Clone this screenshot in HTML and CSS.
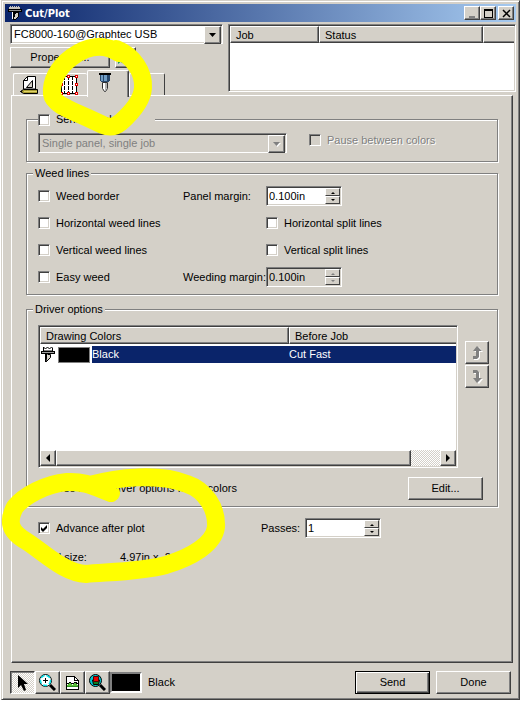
FILE: index.html
```html
<!DOCTYPE html>
<html lang="en">
<head>
    <meta charset="UTF-8">
    <meta name="viewport" content="width=device-width, initial-scale=1.0">
    <title>Cut/Plot</title>
    <link rel="stylesheet" href="styles.css">
</head>
<body>
    <div class="window">
        <header class="title-bar">
            <svg class="title-icon" width="16" height="16" viewBox="0 0 16 16" shape-rendering="crispEdges">
                <path d="M3 1h1v1h1v-1h1v1h1v-1h1v1h1v-1h1v1h1v-1h1v1h1v3h-11v-3h1z" fill="#c8c4bc"/>
                <path d="M1 4h14v3h-14z" fill="#000"/>
                <path d="M2 5h12v1h-12z" fill="#909090"/>
                <path d="M5 7h7v5l-4 3h-2z" fill="#000"/>
                <path d="M9 8h2v3l-3 3h-1z" fill="#d4d0c8"/>
                <path d="M5 7h1v7h-1z" fill="#fff"/>
            </svg>
            <h1>Cut/Plot</h1>
            <button type="button" class="caption-btn" aria-label="Minimize">
                <svg width="9" height="9" viewBox="0 0 9 9"><path d="M1 7h6v2h-6z" fill="#808080"/></svg>
            </button>
            <button type="button" class="caption-btn" aria-label="Maximize">
                <svg width="9" height="9" viewBox="0 0 9 9"><path d="M0 0h9v9h-9zM1 2v6h7v-6z" fill="#000" fill-rule="evenodd"/></svg>
            </button>
            <button type="button" class="caption-btn close-btn" aria-label="Close">
                <svg width="9" height="9" viewBox="0 0 9 9"><path d="M1 1l7 7M8 1l-7 7" stroke="#000" stroke-width="1.500"/></svg>
            </button>
        </header>

        <div class="top-area">
            <div class="device-column">
                <div class="combo">
                    <select aria-label="Device">
                        <option>FC8000-160@Graphtec USB</option>
                    </select>
                </div>
                <div class="device-buttons">
                    <button type="button" class="btn properties-btn">Properties...</button>
                    <button type="button" class="btn refresh-btn" aria-label="Refresh">
                        <svg width="15" height="15" viewBox="0 0 15 15" fill="none" stroke="#18a050" stroke-width="3">
                            <path d="M3 7a5 5 0 0 1 8-3M12 8a5 5 0 0 1-8 3"/>
                            <path d="M9 6h5v-6zM6 9h-6v5z" fill="#18a050" stroke="none"/>
                        </svg>
                    </button>
                </div>
                <div class="tabs" role="tablist">
                    <button type="button" class="tab tab-first" role="tab" aria-label="Page">
                        <svg width="18" height="18" viewBox="0 0 18 18">
                            <path d="M3.500 13v-8.500l4-4h8v12.500z" fill="#fff" stroke="#000"/>
                            <path d="M3.500 4.500h4v-4" fill="none" stroke="#000"/>
                            <path d="M6.500 11.500h6v-7z" fill="#d4d0c8" stroke="#000"/>
                            <path d="M.5 15.500l3-2h14v4h-14z" fill="#a89c30" stroke="#000"/>
                            <path d="M4 15.500h13" stroke="#e0d468"/>
                            <path d="M0 15.500l2-1v2z" fill="#000"/>
                        </svg>
                    </button>
                    <button type="button" class="tab tab-wide" role="tab" aria-label="Panels">
                        <svg width="18" height="20" viewBox="0 0 18 20" shape-rendering="crispEdges">
                            <path d="M1 1h15v18h-15z" fill="#fff"/>
                            <path d="M4.500 1v18M8.500 1v18M12.500 1v18" stroke="#000" stroke-dasharray="4 1"/>
                            <path d="M1.500 1v18M16.500 1v18M1 1.500h15M1 18.500h15" stroke="#000"/>
                            <path d="M0 0h3v3h-3zM7 0h3v3h-3zM15 0h3v3h-3zM15 8h3v3h-3zM0 8h3v3h-3zM0 17h3v3h-3zM7 17h3v3h-3zM15 17h3v3h-3z" fill="#e00000"/>
                            <path d="M1 1h1v1h-1zM8 1h1v1h-1zM16 1h1v1h-1zM16 9h1v1h-1zM1 9h1v1h-1zM1 18h1v1h-1zM8 18h1v1h-1zM16 18h1v1h-1z" fill="#fff"/>
                        </svg>
                    </button>
                    <button type="button" class="tab tab-active" role="tab" aria-selected="true" aria-label="Cut options">
                        <svg width="12" height="20" viewBox="0 0 12 20">
                            <path d="M0 0h12v2h-12z" fill="#000"/>
                            <path d="M1 2h10v6h-1v1h-8v-1h-1z" fill="#26466b"/>
                            <path d="M2 2h2v6h-2zM5 2h3v6h-3z" fill="#6f9cc4"/>
                            <path d="M3.500 9.500h5v6l-2 3h-1l-2-3z" fill="#fff" stroke="#303030"/>
                            <path d="M6 10h2v5l-2 3z" fill="#b0b0b0"/>
                        </svg>
                    </button>
                    <button type="button" class="tab" role="tab" aria-label="Advanced">
                        <svg width="18" height="18" viewBox="0 0 18 18" shape-rendering="crispEdges">
                            <path d="M0 2h2v2h-2zM3 6h5v7h-5zM11 15h2v1h-2z" fill="#404040"/>
                        </svg>
                    </button>
                </div>
            </div>

            <div class="list job-list">
                <table>
                    <thead>
                        <tr><th class="job-col">Job</th><th class="status-col">Status</th><th></th></tr>
                    </thead>
                </table>
            </div>
        </div>

        <main class="panel">
            <fieldset class="group send-group">
                <legend class="check-legend">
                    <label class="check"><input type="checkbox"> Send panels</label>
                </legend>
                <div class="send-row">
                    <div class="combo combo-disabled">
                        <select aria-label="Panel mode" disabled>
                            <option>Single panel, single job</option>
                        </select>
                    </div>
                    <label class="check check-disabled"><input type="checkbox" disabled> Pause between colors</label>
                </div>
            </fieldset>

            <fieldset class="group weed-group">
                <legend>Weed lines</legend>
                <div class="weed-grid">
                    <label class="check"><input type="checkbox"> Weed border</label>
                    <label for="panelMargin">Panel margin:</label>
                    <div class="spin">
                        <input type="text" id="panelMargin" value="0.100in">
                        <div class="spin-buttons">
                            <button type="button" class="spin-up" aria-label="Increase"></button>
                            <button type="button" class="spin-down" aria-label="Decrease"></button>
                        </div>
                    </div>

                    <label class="check check-left"><input type="checkbox"> Horizontal weed lines</label>
                    <label class="check"><input type="checkbox"> Horizontal split lines</label>

                    <label class="check check-left"><input type="checkbox"> Vertical weed lines</label>
                    <label class="check"><input type="checkbox"> Vertical split lines</label>

                    <label class="check"><input type="checkbox"> Easy weed</label>
                    <label for="weedingMargin">Weeding margin:</label>
                    <div class="spin spin-disabled">
                        <input type="text" id="weedingMargin" value="0.100in" disabled>
                        <div class="spin-buttons">
                            <button type="button" class="spin-up" aria-label="Increase" disabled></button>
                            <button type="button" class="spin-down" aria-label="Decrease" disabled></button>
                        </div>
                    </div>
                </div>
            </fieldset>

            <fieldset class="group driver-group">
                <legend>Driver options</legend>
                <div class="driver-row">
                    <div class="list color-list">
                        <table>
                            <thead>
                                <tr><th class="color-col">Drawing Colors</th><th>Before Job</th></tr>
                            </thead>
                            <tbody>
                                <tr>
                                    <td>
                                        <div class="color-cell">
                                            <svg width="14" height="17" viewBox="0 0 14 17">
                                                <path d="M2.500 5v-4l2 2 2-2 2 2 2-2 1 1v3z" fill="#fff" stroke="#000"/>
                                                <path d="M0 5h14v3h-14z" fill="#000"/>
                                                <path d="M1 6h12v1h-12z" fill="#a0a0a0"/>
                                                <path d="M4 8h2v8h-2z" fill="#000"/>
                                                <path d="M6.500 8.500h3v3l-4 4" fill="#d4d0c8" stroke="#000"/>
                                            </svg>
                                            <span class="color-swatch"></span>
                                            <span class="color-name">Black</span>
                                        </div>
                                    </td>
                                    <td class="selected">Cut Fast</td>
                                </tr>
                            </tbody>
                        </table>
                        <div class="scrollbar">
                            <button type="button" class="scroll-btn" aria-label="Scroll left">
                                <svg width="4" height="8" viewBox="0 0 4 8"><path d="M4 0v8l-4-4z"/></svg>
                            </button>
                            <span class="scroll-thumb"></span>
                            <span class="scroll-track"></span>
                            <button type="button" class="scroll-btn" aria-label="Scroll right">
                                <svg width="4" height="8" viewBox="0 0 4 8"><path d="M0 0v8l4-4z"/></svg>
                            </button>
                        </div>
                    </div>
                    <div class="order-buttons">
                        <button type="button" class="btn" aria-label="Move up">
                            <svg width="11" height="14" viewBox="0 0 11 14">
                                <path d="M2 14v-3h3v-5h-3l5-5 4 5h-3v6l-2 2z" fill="#fff"/>
                                <path d="M1 13v-3h3v-5h-3l4-5 5 5h-3v6l-2 2z" fill="#808080"/>
                            </svg>
                        </button>
                        <button type="button" class="btn" aria-label="Move down">
                            <svg width="11" height="14" viewBox="0 0 11 14">
                                <path d="M2 1v3h3v5h-3l5 5 4-5h-3v-6l-2-2z" fill="#fff"/>
                                <path d="M1 0v3h3v5h-3l4 5 5-5h-3v-6l-2-2z" fill="#808080"/>
                            </svg>
                        </button>
                    </div>
                </div>
                <div class="edit-row">
                    <label class="check"><input type="checkbox"> Use same driver options for all colors</label>
                    <button type="button" class="btn">Edit...</button>
                </div>
            </fieldset>

            <div class="plot-row">
                <label class="check"><input type="checkbox" checked> Advance after plot</label>
                <label for="passes">Passes:</label>
                <div class="spin">
                    <input type="text" id="passes" value="1">
                    <div class="spin-buttons">
                        <button type="button" class="spin-up" aria-label="Increase"></button>
                        <button type="button" class="spin-down" aria-label="Decrease"></button>
                    </div>
                </div>
            </div>
            <div class="size-row">
                <span>Total size:</span>
                <span>4.97in x&nbsp; 2.87in</span>
            </div>
        </main>

        <footer class="footer">
            <div class="tools">
                <button type="button" class="btn tool pressed" aria-label="Select">
                    <svg width="11" height="16" viewBox="0 0 11 16"><path d="M1 0v13l3-3 3 6 2-1-2-6h4z"/></svg>
                </button>
                <button type="button" class="btn tool" aria-label="Zoom">
                    <svg width="17" height="17" viewBox="0 0 17 17">
                        <path d="M11 11l5 5" stroke="#000" stroke-width="3"/>
                        <circle cx="6.500" cy="6.500" r="6" fill="#fff" stroke="#000"/>
                        <circle cx="6.500" cy="6.500" r="5" fill="none" stroke="#00e0e8" stroke-width="1.500" stroke-dasharray="4 2"/>
                        <path d="M4 6.500h5M6.500 4v5" stroke="#000"/>
                    </svg>
                </button>
                <button type="button" class="btn tool" aria-label="Fit page">
                    <svg width="13" height="14" viewBox="0 0 13 14" shape-rendering="crispEdges">
                        <path d="M.5 .5h8l4 4v9h-12z" fill="#fff" stroke="#000"/>
                        <path d="M8.500 .5v4h4" fill="none" stroke="#000"/>
                        <path d="M1 9l3-2 2 2 3-2 3 2v2h-11z" fill="#5bbf3c"/>
                        <path d="M1 8l2-1 1-1 2 2 2-1 1-1 3 2" fill="none" stroke="#000"/>
                        <path d="M1 10h11v1h-11z" fill="#2b8a1e"/>
                    </svg>
                </button>
                <button type="button" class="btn tool" aria-label="Zoom selection">
                    <svg width="17" height="17" viewBox="0 0 17 17">
                        <path d="M11 11l5 5" stroke="#000" stroke-width="3"/>
                        <circle cx="6.500" cy="6.500" r="6" fill="#00c8d0" stroke="#000"/>
                        <path d="M3.500 6h7l-1 4.500h-5z" fill="#108020" stroke="#000"/>
                        <path d="M4.500 2.500h5v5h-5z" fill="#e80000" stroke="#500000"/>
                    </svg>
                </button>
                <span class="current-swatch"></span>
                <span class="current-name">Black</span>
            </div>
            <button type="button" class="btn default-btn">Send</button>
            <button type="button" class="btn">Done</button>
        </footer>

        <svg class="marker" width="240" height="600" viewBox="0 0 240 600" aria-hidden="true">
            <path d="M119 53C104 43 87 46 72 57S51 82 52 94C53 104 70 110 88 118L103 125C110 128 115 127 121 122C130 114 142 101 143 88C144 73 134 56 116 49"/>
            <path d="M111 493C95 487 85 481 67 482C45 484 24 496 15 507C6 524 12 533 26 541C45 553 64 573 86 574C105 572 140 572 166 565C192 557 214 544 216 527C217 508 205 490 187 484C160 473 118 477 90 485"/>
        </svg>
    </div>
</body>
</html>
```
FILE: styles.css
```css
:root {
    --face: #d4d0c8;
    --light: #fff;
    --shadow: #808080;
    --dark: #404040;
    --highlight: #0a246a;
}

* {
    margin: 0;
    padding: 0;
    box-sizing: border-box;
}

body {
    display: flex;
    min-height: 100vh;
    padding: 0 3px 1px 1px;
    background: #fff;
    color: #000;
    font: 11px/13px "Liberation Sans", Arial, sans-serif;
}

button,
input,
select {
    font: inherit;
    color: inherit;
    border-radius: 0;
}

svg {
    display: block;
    flex: none;
}

.window {
    position: relative;
    flex: 1;
    display: flex;
    flex-direction: column;
    padding: 3px;
    background: var(--face);
    border: 1px solid;
    border-color: var(--face) var(--dark) var(--dark) var(--face);
    box-shadow: inset 1px 1px 0 var(--light), inset -1px -1px 0 var(--shadow);
}

/* Title bar */
.title-bar {
    display: flex;
    align-items: center;
    height: 18px;
    padding: 0 2px;
    background: linear-gradient(to right, #0a246a, #a6caf0);
    color: #fff;
}

.title-bar h1 {
    flex: 1;
    margin-left: 2px;
    font: bold 11px/13px "DejaVu Sans Condensed", Tahoma, sans-serif;
}

.caption-btn {
    display: flex;
    align-items: center;
    justify-content: center;
    width: 16px;
    height: 14px;
    background: var(--face);
    border: 1px solid;
    border-color: var(--light) var(--dark) var(--dark) var(--light);
    box-shadow: inset -1px -1px 0 var(--shadow);
}

.close-btn {
    margin-left: 2px;
}

/* Buttons */
.btn {
    display: flex;
    align-items: center;
    justify-content: center;
    width: 75px;
    height: 23px;
    background: var(--face);
    border: 1px solid;
    border-color: var(--light) var(--dark) var(--dark) var(--light);
    box-shadow: inset -1px -1px 0 var(--shadow);
}

.default-btn {
    border-color: #000;
    box-shadow: inset 1px 1px 0 var(--light), inset -1px -1px 0 var(--dark), inset -2px -2px 0 var(--shadow);
}

/* Drop-downs */
.combo {
    position: relative;
    height: 20px;
    background: #fff;
    border: 1px solid;
    border-color: var(--shadow) var(--light) var(--light) var(--shadow);
    box-shadow: inset 1px 1px 0 var(--dark), inset -1px -1px 0 var(--face);
}

.combo select {
    appearance: none;
    display: block;
    width: 100%;
    height: 18px;
    padding: 0 20px 0 3px;
    background: transparent;
    border: none;
}

.combo::after {
    content: "";
    position: absolute;
    top: 1px;
    right: 1px;
    width: 15px;
    height: 16px;
    background: url("data:image/svg+xml,%3Csvg xmlns='http://www.w3.org/2000/svg' width='7' height='4'%3E%3Cpath d='M0 0h7l-3.500 4z'/%3E%3C/svg%3E") center no-repeat var(--face);
    border: 1px solid;
    border-color: var(--light) var(--dark) var(--dark) var(--light);
    box-shadow: inset -1px -1px 0 var(--shadow);
    pointer-events: none;
}

.combo-disabled {
    flex: none;
    width: 249px;
    background: var(--face);
}

.combo-disabled select {
    color: var(--shadow);
    opacity: 1;
}

.combo-disabled::after {
    background-image: url("data:image/svg+xml,%3Csvg xmlns='http://www.w3.org/2000/svg' width='8' height='5'%3E%3Cpath d='M1 1h7l-3.500 4z' fill='white'/%3E%3Cpath d='M0 0h7l-3.500 4z' fill='gray'/%3E%3C/svg%3E");
}

/* Check boxes */
.check {
    display: flex;
    align-items: center;
    gap: 6px;
    white-space: nowrap;
}

.check input {
    appearance: none;
    flex: none;
    width: 12px;
    height: 12px;
    background: #fff center no-repeat;
    border: 1px solid;
    border-color: var(--shadow) var(--light) var(--light) var(--shadow);
    box-shadow: inset 1px 1px 0 var(--dark), inset -1px -1px 0 var(--face);
}

.check input:checked {
    background-image: url("data:image/svg+xml,%3Csvg xmlns='http://www.w3.org/2000/svg' width='8' height='8'%3E%3Cpath d='M1 3l2 2 4-4v3l-4 4-2-2z'/%3E%3C/svg%3E");
}

.check-disabled {
    color: var(--shadow);
    text-shadow: 1px 1px 0 var(--light);
}

.check-disabled input {
    background-color: var(--face);
}

/* Spin boxes */
.spin {
    display: flex;
    width: 76px;
    height: 20px;
    padding: 1px;
    background: #fff;
    border: 1px solid;
    border-color: var(--shadow) var(--light) var(--light) var(--shadow);
    box-shadow: inset 1px 1px 0 var(--dark), inset -1px -1px 0 var(--face);
}

.spin input {
    flex: 1;
    min-width: 0;
    padding-left: 1px;
    background: transparent;
    border: none;
}

.spin-buttons {
    display: flex;
    flex-direction: column;
    width: 15px;
}

.spin-buttons button {
    flex: 1;
    background-color: var(--face);
    background-position: center;
    background-repeat: no-repeat;
    border: 1px solid;
    border-color: var(--light) var(--dark) var(--dark) var(--light);
}

.spin-up {
    background-image: url("data:image/svg+xml,%3Csvg xmlns='http://www.w3.org/2000/svg' width='5' height='3'%3E%3Cpath d='M1 3h4l-2-2z'/%3E%3C/svg%3E");
}

.spin-down {
    background-image: url("data:image/svg+xml,%3Csvg xmlns='http://www.w3.org/2000/svg' width='5' height='3'%3E%3Cpath d='M1 0h4l-2 2z'/%3E%3C/svg%3E");
}

.spin-disabled {
    background: var(--face);
}

.spin-disabled .spin-up {
    background-image: url("data:image/svg+xml,%3Csvg xmlns='http://www.w3.org/2000/svg' width='5' height='3'%3E%3Cpath d='M1 3h4l-2-2z' fill='gray'/%3E%3C/svg%3E");
}

.spin-disabled .spin-down {
    background-image: url("data:image/svg+xml,%3Csvg xmlns='http://www.w3.org/2000/svg' width='5' height='3'%3E%3Cpath d='M1 0h4l-2 2z' fill='gray'/%3E%3C/svg%3E");
}

.spin-disabled input {
    color: #000;
}

/* Lists */
.list {
    display: flex;
    flex-direction: column;
    min-width: 0;
    padding: 1px;
    background: #fff;
    border: 1px solid;
    border-color: var(--shadow) var(--light) var(--light) var(--shadow);
    box-shadow: inset 1px 1px 0 var(--dark), inset -1px -1px 0 var(--face);
}

.list table {
    width: 100%;
    table-layout: fixed;
    border-spacing: 0;
}

.list th {
    height: 17px;
    padding: 1px 5px 0;
    background: var(--face);
    border: 1px solid;
    border-color: var(--light) var(--dark) var(--dark) var(--light);
    box-shadow: inset -1px -1px 0 var(--shadow);
    font-weight: normal;
    text-align: left;
}

.list th:last-child {
    border-right: none;
    box-shadow: inset 0 -1px 0 var(--shadow);
}

/* Device and job list */
.top-area {
    display: flex;
    align-items: flex-start;
    gap: 5px;
    margin-top: 2px;
    padding-left: 5px;
}

.device-column {
    width: 213px;
}

.device-buttons {
    display: flex;
    gap: 5px;
    margin: 3px 0 2px;
}

.properties-btn {
    width: 100px;
    height: 21px;
}

.refresh-btn {
    width: 21px;
    height: 21px;
}

.job-list {
    flex: 1;
    min-height: 68px;
}

.job-col {
    width: 89px;
}

.status-col {
    width: 164px;
}

/* Tabs */
.tabs {
    display: flex;
    align-items: flex-end;
    height: 25px;
    padding-left: 3px;
}

.tab {
    display: flex;
    align-items: center;
    justify-content: center;
    width: 36px;
    height: 22px;
    background: var(--face);
    border: 1px solid;
    border-color: var(--light) var(--dark) transparent var(--light);
    border-bottom: none;
    border-radius: 2px 2px 0 0;
}

.tab-first {
    padding-right: 5px;
    border-right: none;
}

.tab-wide {
    width: 38px;
    border-right: none;
}

.tab-active {
    position: relative;
    z-index: 1;
    width: 42px;
    height: 27px;
    margin-bottom: -2px;
    padding: 0 6px 3px 0;
    box-shadow: inset -1px 0 0 var(--shadow);
}

/* Options panel */
.panel {
    flex: 1;
    margin: 0 3px 0 6px;
    padding: 17px 14px 13px;
    border: 1px solid;
    border-color: var(--light) var(--dark) var(--dark) var(--light);
    box-shadow: inset -1px -1px 0 var(--shadow);
}

.group {
    min-width: 0;
    border: 1px solid var(--shadow);
    box-shadow: 1px 1px 0 var(--light), inset 1px 1px 0 var(--light);
}

.group legend {
    margin-left: -5px;
    padding: 0 2px;
    background: var(--face);
}

.group .check-legend {
    width: 117px;
    height: 12px;
    margin-left: 0;
    padding: 0;
}

.send-group {
    padding: 8px 11px;
}

.send-row {
    display: flex;
    gap: 22px;
}

.send-row .check {
    height: 14px;
}

.weed-group {
    margin-top: 5px;
    padding: 6px 11px 7px;
}

.weed-grid {
    display: grid;
    grid-template-columns: 145px 83px 1fr;
    grid-auto-rows: 20px;
    row-gap: 7px;
    align-items: center;
    white-space: nowrap;
}

.check-left {
    grid-column: span 2;
}

.driver-group {
    margin-top: 8px;
    padding: 9px 8px 6px 11px;
}

.driver-row {
    display: flex;
    gap: 7px;
}

.color-list {
    flex: 1;
    height: 143px;
}

.color-col {
    width: 249px;
}

.color-list tr td {
    height: 17px;
    padding: 0;
}

.color-list thead::after {
    content: "";
    display: block;
    height: 2px;
}

.color-cell {
    display: flex;
    align-items: center;
    gap: 2px;
    height: 17px;
    padding-left: 1px;
}

.color-swatch {
    width: 32px;
    height: 16px;
    margin-left: 1px;
    background: #000;
    border: 1px solid var(--shadow);
}

.color-name {
    flex: 1;
    padding: 2px 0;
    background: var(--highlight);
    color: #fff;
}

.selected {
    background: var(--highlight);
    color: #fff;
}

.scrollbar {
    display: flex;
    height: 16px;
    margin-top: auto;
}

.scroll-btn {
    display: flex;
    align-items: center;
    justify-content: center;
    width: 16px;
}

.scroll-btn,
.scroll-thumb {
    background: var(--face);
    border: 1px solid;
    border-color: var(--light) var(--dark) var(--dark) var(--light);
    box-shadow: inset -1px -1px 0 var(--shadow);
}

.scroll-thumb {
    flex: 12;
}

.scroll-track {
    flex: 1;
}

.scroll-track,
.pressed {
    background: repeating-conic-gradient(#fff 0 25%, var(--face) 0 50%) 0 0 / 2px 2px;
}

.order-buttons {
    display: flex;
    flex-direction: column;
    gap: 1px;
    padding-top: 16px;
}

.order-buttons .btn {
    width: 24px;
}

.edit-row {
    display: flex;
    align-items: center;
    justify-content: space-between;
    margin: 9px 6px 0 0;
}

.plot-row {
    display: grid;
    grid-template-columns: 223px 44px 1fr;
    align-items: center;
    margin-top: 11px;
    padding-left: 12px;
}

.size-row {
    display: grid;
    grid-template-columns: 82px 1fr;
    margin-top: 13px;
    padding-left: 12px;
}

/* Footer */
.footer {
    display: flex;
    gap: 6px;
    padding: 8px 5px 2px;
}

.tools {
    flex: 1;
    display: flex;
    align-items: center;
}

.tool {
    width: 25px;
}

.pressed {
    border-color: var(--dark) var(--light) var(--light) var(--dark);
    box-shadow: inset 1px 1px 0 var(--shadow);
}

.current-swatch {
    width: 32px;
    height: 21px;
    background: #000;
    border: 2px solid;
    border-color: var(--shadow) var(--light) var(--light) var(--shadow);
}

.current-name {
    margin-left: 6px;
}

/* Highlighter strokes over the dialog */
.marker {
    position: absolute;
    top: -1px;
    left: -2px;
    z-index: 2;
    fill: none;
    stroke: #ff0;
    stroke-width: 18px;
    stroke-linecap: round;
    stroke-linejoin: round;
    pointer-events: none;
}
```
